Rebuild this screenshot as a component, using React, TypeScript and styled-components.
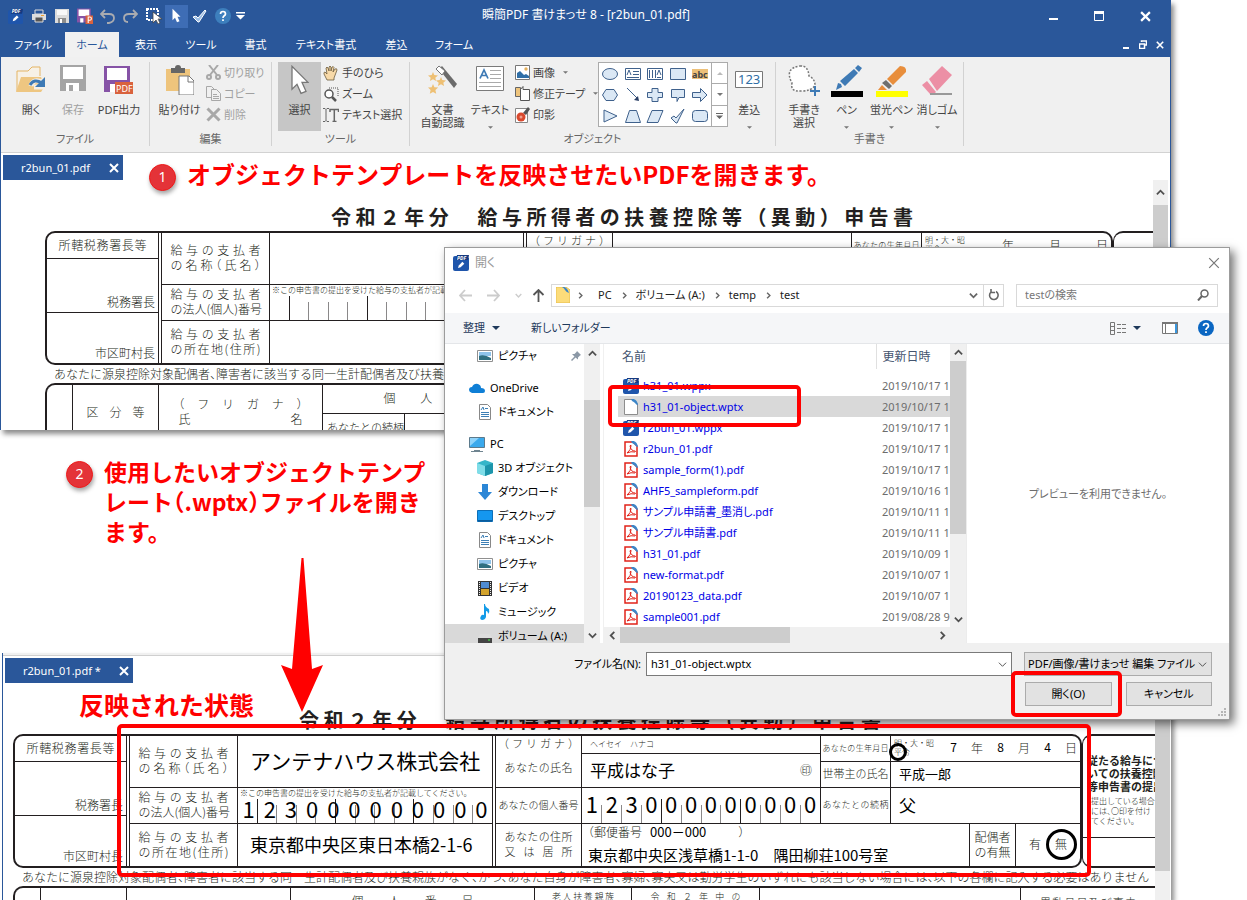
import React from "react";
import styled, { createGlobalStyle, css } from "styled-components";

const uiFont = '"Noto Sans", "Noto Sans CJK JP", sans-serif';
const paperFont = '"Noto Sans CJK JP", sans-serif';
const blue = "#2a579a";
const ink = "#231f20";

const Global = createGlobalStyle`
  * { box-sizing: border-box; }
  body { margin: 0; background: #fff; font-family: ${uiFont}; font-size: 11px; line-height: 14px; color: #444; }
  button, input, select { font: inherit; color: inherit; margin: 0; }
  button { border: 0; padding: 0; background: none; }
  svg { display: block; flex: none; }
`;

const Stage = styled.main`
  position: relative;
  min-height: 100vh;
  overflow: hidden;
  font-feature-settings: "palt";
`;

/* ---------- editor window ---------- */

const EditorWindow = styled.section`
  position: absolute;
  left: 0;
  right: 76px;
  top: 0;
  height: 430px;
  display: flex;
  flex-direction: column;
  overflow: hidden;
  background: #fff;
  border: solid ${blue};
  border-width: 0 1px;
`;

const WindowShadow = styled.div<{ $top: number; $height?: number }>`
  position: absolute;
  left: 0;
  right: 76px;
  top: ${(p) => p.$top}px;
  ${(p) => (p.$height ? `height: ${p.$height}px;` : "bottom: 0;")}
  box-shadow: 3px 4px 5px rgba(0, 0, 0, 0.45);
`;

const ResultWindow = styled.section`
  position: absolute;
  left: 2px;
  right: 76px;
  top: 653px;
  bottom: 0;
  display: flex;
  flex-direction: column;
  overflow: hidden;
  background: #fff;
  border-left: 1px solid ${blue};
`;

const RibbonEdge = styled.div`
  flex: none;
  height: 3px;
  background: #f0f0f0;
  border-bottom: 1px solid #cfcfcf;
`;

const TitleBar = styled.header`
  flex: none;
  height: 32px;
  display: flex;
  background: ${blue};
  color: #fff;
`;

const QuickBar = styled.div`
  flex: 1;
  display: flex;
  align-items: center;
  padding-left: 3px;
`;

const QuickButton = styled.button<{ $on?: boolean; $narrow?: boolean }>`
  width: ${(p) => (p.$narrow ? 13 : 23)}px;
  height: 23px;
  display: flex;
  align-items: center;
  justify-content: center;
  background: ${(p) => (p.$on ? "#3e6db5" : "none")};
`;

const AppTitle = styled.h1`
  margin: 0;
  font-size: 12px;
  font-weight: 400;
  line-height: 30px;
`;

const WindowButtons = styled.div`
  flex: 1;
  display: flex;
  justify-content: flex-end;
  padding-right: 2px;
`;

const WindowButton = styled.button<{ $w: number }>`
  width: ${(p) => p.$w}px;
  height: 100%;
  display: flex;
  align-items: center;
  justify-content: center;
`;

const TabRow = styled.nav`
  flex: none;
  height: 25px;
  display: flex;
  background: ${blue};
`;

const RibbonTab = styled.button<{ $w: number; $on?: boolean }>`
  width: ${(p) => p.$w}px;
  color: ${(p) => (p.$on ? blue : "#fff")};
  background: ${(p) => (p.$on ? "#f1f1f1" : "none")};
`;

const Ribbon = styled.div`
  flex: none;
  height: 96px;
  display: flex;
  padding-top: 5px;
  background: #f0f0f0;
  border-bottom: 1px solid #d2d2d2;
`;

const Group = styled.section<{ $w: number }>`
  width: ${(p) => p.$w}px;
  height: 84px;
  display: flex;
  flex-direction: column;
  border-right: 1px solid #d2d2d2;
`;

const GroupBody = styled.div<{ $pad?: number }>`
  height: 69px;
  display: flex;
  padding: 0 5px 0 ${(p) => p.$pad ?? 5}px;
`;

const GroupName = styled.h2`
  margin: 0;
  font-size: 11px;
  line-height: 15px;
  font-weight: 400;
  color: #666;
  text-align: center;
`;

const BigButton = styled.button<{ $w: number; $on?: boolean; $off?: boolean }>`
  flex: none;
  width: ${(p) => p.$w}px;
  height: 69px;
  display: flex;
  flex-direction: column;
  align-items: center;
  line-height: 13px;
  white-space: nowrap;
  color: ${(p) => (p.$off ? "#a0a0a0" : "#444")};
  background: ${(p) => (p.$on ? "#c6c6c6" : "none")};
`;

const IconSlot = styled.span`
  height: 41px;
  padding-top: 3px;
`;

const CaretSlot = styled.span`
  margin-top: auto;
  padding-bottom: 2px;
`;

const SmallColumn = styled.div`
  display: flex;
  flex-direction: column;
  padding-left: 2px;
`;

const SmallButton = styled.button<{ $off?: boolean }>`
  height: 21px;
  display: flex;
  align-items: center;
  justify-content: flex-start;
  gap: 3px;
  white-space: nowrap;
  color: ${(p) => (p.$off ? "#a0a0a0" : "#444")};
`;

const SideCaret = styled.span`
  padding-left: 5px;
`;

const Gallery = styled.div`
  flex: none;
  width: 130px;
  height: 65px;
  display: flex;
  background: #fff;
  border: 1px solid #ababab;
`;

const GalleryGrid = styled.div`
  flex: 1;
  display: grid;
  grid-template-columns: repeat(5, 1fr);
  grid-auto-rows: 21px;
`;

const GalleryCell = styled.button`
  display: flex;
  align-items: center;
  justify-content: center;
`;

const GallerySteps = styled.div`
  width: 16px;
  display: flex;
  flex-direction: column;
`;

const GalleryStep = styled.button`
  flex: 1;
  display: flex;
  align-items: center;
  justify-content: center;
  border: solid #ababab;
  border-width: 0 0 1px 1px;
  &:last-child { border-bottom: 0; }
`;

const DocTabs = styled.div`
  flex: none;
  display: flex;
  padding: 2px 0 0 2px;
`;

const DocTab = styled.div<{ $w: number }>`
  width: ${(p) => p.$w}px;
  height: 25px;
  display: flex;
  align-items: center;
  justify-content: space-between;
  padding: 0 4px 0 18px;
  color: #fff;
  background: ${blue};
`;

/* ---------- scroll bars ---------- */

const VBar = styled.div<{ $w?: number; $inset?: number }>`
  flex: none;
  width: ${(p) => p.$w ?? 15}px;
  margin-right: ${(p) => p.$inset ?? 0}px;
  display: flex;
  flex-direction: column;
  background: #f0f0f0;
`;

const HBar = styled.div`
  height: 16px;
  display: flex;
  background: #f0f0f0;
`;

const BarButton = styled.button<{ $size?: number }>`
  flex: none;
  min-width: 16px;
  height: ${(p) => p.$size ?? 16}px;
  display: flex;
  align-items: center;
  justify-content: center;
  align-self: center;
`;

const Thumb = styled.div<{ $before?: number; $length?: number; $flat?: boolean }>`
  background: #cdcdcd;
  ${(p) =>
    p.$flat
      ? css`width: ${p.$length}px;`
      : css`
          margin-top: ${p.$before ?? 0}px;
          ${p.$length ? `height: ${p.$length}px;` : "flex: 1;"}
        `}
`;

const Push = styled.span`
  flex: 1;
`;

/* ---------- tax form ---------- */

const DocArea = styled.div`
  flex: 1;
  display: flex;
  min-height: 0;
`;

const Paper = styled.article<{ $left: number }>`
  flex: 1;
  min-width: 0;
  overflow: hidden;
  padding: 25px 0 0 ${(p) => p.$left}px;
  font-family: ${paperFont};
  font-size: 12px;
  font-weight: 300;
  font-feature-settings: "halt";
  color: ${ink};
  line-height: 15px;
`;

const PaperTitle = styled.h2`
  width: 582px;
  margin: 0 0 2px 286px;
  font-size: 20px;
  line-height: 24px;
  font-weight: 700;
  font-feature-settings: normal;
  white-space: nowrap;
  text-align-last: justify;
`;

const Sheet = styled.div`
  display: flex;
  height: 134px;
`;

const FormBox = styled.div`
  flex: 1;
  min-width: 0;
  display: flex;
  border: 2px solid ${ink};
  border-radius: 10px;
`;

const SideBox = styled.div<{ $w: number }>`
  flex: none;
  width: ${(p) => p.$w}px;
  overflow: hidden;
  white-space: nowrap;
  border: 2px solid ${ink};
  border-width: 2px 0 2px 1px;
  border-radius: 10px 0 0 10px;
`;

const SideLead = styled.p`
  height: 60px;
  margin: 0;
  padding: 18px 0 0 4px;
  font-size: 11px;
  line-height: 13px;
  font-weight: 700;
`;

const SideText = styled.p`
  height: 42px;
  margin: 0;
  padding-left: 8px;
  font-size: 8px;
  line-height: 10px;
  border-bottom: 1px solid ${ink};
`;

const Column = styled.div<{ $w?: number; $edge?: "single" | "double" }>`
  flex: ${(p) => (p.$w ? "none" : "1")};
  width: ${(p) => (p.$w ? `${p.$w}px` : "auto")};
  min-width: 0;
  display: flex;
  flex-direction: column;
  border-right: ${(p) => (p.$edge === "double" ? `4px double ${ink}` : p.$edge ? `1px solid ${ink}` : "0")};
`;

const Band = styled.div<{ $h: number; $line?: boolean }>`
  height: ${(p) => p.$h}px;
  display: flex;
  border-bottom: ${(p) => (p.$line ? `1px solid ${ink}` : "0")};
`;

const Cell = styled.div<{ $h: number; $align?: string; $valign?: string; $pad?: number; $last?: boolean; $flush?: boolean }>`
  flex: none;
  height: ${(p) => p.$h}px;
  display: flex;
  flex-direction: column;
  justify-content: ${(p) => p.$valign ?? "center"};
  align-items: ${(p) => p.$align ?? "center"};
  padding: 0 ${(p) => p.$pad ?? 0}px ${(p) => (p.$flush ? 0 : 3)}px;
  white-space: nowrap;
  border-bottom: ${(p) => (p.$last ? "0" : `1px solid ${ink}`)};
`;

const Spread = styled.span<{ $w: number; $size?: number }>`
  display: block;
  width: ${(p) => p.$w}px;
  font-size: ${(p) => p.$size ?? 12}px;
  text-align-last: justify;
`;

const Hand = styled.span<{ $size: number }>`
  font-size: ${(p) => p.$size}px;
  line-height: ${(p) => p.$size + 2}px;
  font-weight: 400;
  color: #000;
`;

const Remark = styled.span`
  height: 9px;
  font-size: 8px;
  line-height: 9px;
  padding-left: 2px;
`;

const NumberStrip = styled.div`
  flex: 1;
  width: 100%;
  display: grid;
`;

const Ticks = styled.div`
  grid-area: 1 / 1;
  display: flex;
  align-items: flex-end;
`;

const Tick = styled.span<{ $major: boolean; $none: boolean }>`
  flex: 1;
  height: ${(p) => (p.$major ? 24 : 18)}px;
  border-right: ${(p) => (p.$none ? "0" : p.$major ? `1px solid ${ink}` : "1px solid #8a8889")};
`;

const Digits = styled.div`
  grid-area: 1 / 1;
  display: flex;
  align-items: center;
  padding-bottom: 5px;
`;

const Digit = styled.span`
  flex: 1;
  text-align: center;
  font-size: 22px;
  line-height: 20px;
  font-weight: 400;
  color: #000;
`;

const Inline = styled.div<{ $gap?: number; $between?: boolean }>`
  width: ${(p) => (p.$between ? "100%" : "auto")};
  display: flex;
  align-items: center;
  justify-content: ${(p) => (p.$between ? "space-between" : "flex-start")};
  gap: ${(p) => p.$gap ?? 0}px;
`;

const Tiny = styled.span`
  width: 42px;
  font-size: 8px;
  line-height: 9px;
  font-feature-settings: normal;
`;

const Ringed = styled.span`
  position: relative;
`;

const Ring = styled.i<{ $size: number; $x: number; $y: number }>`
  position: absolute;
  left: ${(p) => p.$x}px;
  top: ${(p) => p.$y}px;
  width: ${(p) => p.$size}px;
  height: ${(p) => p.$size}px;
  border: 3px solid #000;
  border-radius: 50%;
`;

const Notice = styled.p`
  margin: 0;
  padding-left: 9px;
  font-size: 12px;
  line-height: 18px;
  white-space: nowrap;
  overflow: hidden;
`;

const LowerBox = styled.div`
  height: 120px;
  display: flex;
  border: solid ${ink};
  border-width: 2px 0 0 2px;
  border-radius: 10px 0 0 0;
`;

const LowerCell = styled.div<{ $w?: number; $top?: number }>`
  flex: ${(p) => (p.$w ? "none" : "1")};
  width: ${(p) => (p.$w ? `${p.$w}px` : "auto")};
  display: flex;
  flex-direction: column;
  align-items: center;
  padding-top: ${(p) => p.$top ?? 0}px;
  white-space: nowrap;
  border-right: 1px solid ${ink};
  &:last-child { border-right: 0; }
`;

const LowerHead = styled.div`
  width: 100%;
  height: 29px;
  display: flex;
  justify-content: center;
  padding-top: 5px;
  border-bottom: 1px solid ${ink};
`;

const LowerRelation = styled.div`
  width: 82px;
  height: 90px;
  align-self: flex-start;
  padding: 6px 0 0 4px;
  font-size: 11px;
  border-right: 1px solid ${ink};
`;

type Filled = {
  company: string;
  corporate: string;
  companyAddress: string;
  kana: string;
  name: string;
  personal: string;
  year: string;
  month: string;
  day: string;
  head: string;
  relation: string;
  post: string;
  address: string;
};

const filled: Filled = {
  company: "アンテナハウス株式会社",
  corporate: "123000000000",
  companyAddress: "東京都中央区東日本橋2-1-6",
  kana: "ヘイセイ　ハナコ",
  name: "平成はな子",
  personal: "123000000000",
  year: "7",
  month: "8",
  day: "4",
  head: "平成一郎",
  relation: "父",
  post: "000－000",
  address: "東京都中央区浅草橋1-1-0　隅田柳荘100号室",
};

const NumberRow = ({ cells, first, value }: { cells: number; first: number; value?: string }) => (
  <NumberStrip>
    <Ticks>
      {Array.from({ length: cells }, (_, i) => (
        <Tick key={i} $major={i % 4 === first} $none={i === cells - 1} />
      ))}
    </Ticks>
    {value && (
      <Digits>
        {value.split("").map((d, i) => (
          <Digit key={i}>{d}</Digit>
        ))}
      </Digits>
    )}
  </NumberStrip>
);

const TaxForm = ({ left, side, data }: { left: number; side: number; data?: Filled }) => (
  <Paper $left={left}>
    <PaperTitle>令和２年分　給与所得者の扶養控除等（異動）申告書</PaperTitle>
    <Sheet>
      <FormBox>
        <Column $w={115} $edge="double">
          <Cell $h={26}>
            <Spread $w={88}>所轄税務署長等</Spread>
          </Cell>
          <Cell $h={54} $align="flex-end" $valign="flex-end" $pad={3}>税務署長</Cell>
          <Cell $h={50} $align="flex-end" $valign="flex-end" $pad={3} $last>市区町村長</Cell>
        </Column>
        <Column $w={108} $edge="single">
          <Cell $h={52}>
            <Spread $w={90}>給与の支払者</Spread>
            <Spread $w={90}>の名称（氏名）</Spread>
          </Cell>
          <Cell $h={36}>
            <Spread $w={90}>給与の支払者</Spread>
            <Spread $w={90}>の法人(個人)番号</Spread>
          </Cell>
          <Cell $h={42} $last>
            <Spread $w={90}>給与の支払者</Spread>
            <Spread $w={90}>の所在地(住所)</Spread>
          </Cell>
        </Column>
        <Column $edge="double">
          <Cell $h={52} $align="flex-start" $pad={12}>
            <Hand $size={21}>{data?.company}</Hand>
          </Cell>
          <Cell $h={36} $align="flex-start" $flush>
            <Remark>※この申告書の提出を受けた給与の支払者が記載してください。</Remark>
            <NumberRow cells={13} first={0} value={data?.corporate} />
          </Cell>
          <Cell $h={42} $align="flex-start" $pad={12} $last>
            <Hand $size={18}>{data?.companyAddress}</Hand>
          </Cell>
        </Column>
        <Column $w={86} $edge="single">
          <Cell $h={52} $valign="space-between">
            <Spread $w={70} $size={11}>（フリガナ）</Spread>
            <Spread $w={68} $size={11}>あなたの氏名</Spread>
            <span />
          </Cell>
          <Cell $h={36}>
            <Spread $w={80} $size={10}>あなたの個人番号</Spread>
          </Cell>
          <Cell $h={42} $last>
            <Spread $w={68} $size={11}>あなたの住所</Spread>
            <Spread $w={68} $size={11}>又は居所</Spread>
          </Cell>
        </Column>
        <Column $w={498}>
          <Band $h={88} $line>
            <Column $edge="single">
              <Cell $h={18} $align="flex-start" $pad={6}>
                <Remark>{data?.kana}</Remark>
              </Cell>
              <Cell $h={34} $align="flex-start" $pad={8}>
                <Inline $between>
                  <Hand $size={17}>{data?.name}</Hand>
                  <span>㊞</span>
                </Inline>
              </Cell>
              <Cell $h={35} $last $flush>
                <NumberRow cells={12} first={3} value={data?.personal} />
              </Cell>
            </Column>
            <Column $w={70} $edge="single">
              <Cell $h={26}>
                <Spread $w={66} $size={8}>あなたの生年月日</Spread>
              </Cell>
              <Cell $h={26}>
                <Spread $w={66} $size={11}>世帯主の氏名</Spread>
              </Cell>
              <Cell $h={35} $last>
                <Spread $w={66} $size={9}>あなたとの続柄</Spread>
              </Cell>
            </Column>
            <Column $w={189}>
              <Cell $h={26} $pad={3}>
                <Inline $between>
                  <Tiny>
                    明・大・昭
                    <br />
                    <Ringed>
                      平{data && <Ring $size={18} $x={-5} $y={-3} />}
                    </Ringed>
                    　令
                  </Tiny>
                  <Hand $size={12}>{data?.year ?? "　"}</Hand>
                  <span>年</span>
                  <Hand $size={12}>{data?.month ?? "　"}</Hand>
                  <span>月</span>
                  <Hand $size={12}>{data?.day ?? "　"}</Hand>
                  <span>日</span>
                </Inline>
              </Cell>
              <Cell $h={26} $align="flex-start" $pad={8}>
                <Hand $size={13}>{data?.head}</Hand>
              </Cell>
              <Cell $h={35} $align="flex-start" $pad={8} $last>
                <Hand $size={17}>{data?.relation}</Hand>
              </Cell>
            </Column>
          </Band>
          <Band $h={42}>
            <Column $edge="single">
              <Cell $h={42} $align="flex-start" $pad={6} $valign="space-between" $last>
                <Inline $gap={8}>
                  <span>（郵便番号</span>
                  <Hand $size={13}>{data?.post}</Hand>
                  <span>　　）</span>
                </Inline>
                <Hand $size={15}>{data?.address}</Hand>
              </Cell>
            </Column>
            <Column $w={46} $edge="single">
              <Cell $h={42} $last>
                <span>配偶者</span>
                <span>の有無</span>
              </Cell>
            </Column>
            <Column $w={64}>
              <Cell $h={42} $last>
                <Inline $gap={14}>
                  <span>有</span>
                  <Ringed>
                    無{data && <Ring $size={31} $x={-9} $y={-7} />}
                  </Ringed>
                </Inline>
              </Cell>
            </Column>
          </Band>
        </Column>
      </FormBox>
      <SideBox $w={side}>
        {data && (
          <>
            <SideLead>
              従たる給与につ
              <br />
              いての扶養控除
              <br />
              等申告書の提出
            </SideLead>
            <SideText>
              提出している場合
              <br />
              には、〇印を付け
              <br />
              てください。
            </SideText>
          </>
        )}
      </SideBox>
    </Sheet>
    <Notice>
      あなたに源泉控除対象配偶者、障害者に該当する同一生計配偶者及び扶養親族がなく、かつ、あなた自身が障害者、寡婦、寡夫又は勤労学生のいずれにも該当しない場合には、以下の各欄に記入する必要はありません
    </Notice>
    <LowerBox>
      <LowerCell $w={26} />
      <LowerCell $w={86} $top={19}>
        <Spread $w={58}>区分等</Spread>
      </LowerCell>
      <LowerCell $w={164} $top={11}>
        <Spread $w={124}>（フリガナ）</Spread>
        <Spread $w={124}>氏名</Spread>
      </LowerCell>
      <LowerCell $w={244}>
        <LowerHead>
          <Spread $w={122}>個人番号</Spread>
        </LowerHead>
        <LowerRelation>あなたとの続柄</LowerRelation>
      </LowerCell>
      <LowerCell $w={97} $top={1}>
        <Spread $w={62} $size={9}>老人扶養親族</Spread>
      </LowerCell>
      <LowerCell $w={128} $top={1}>
        <Spread $w={90} $size={9}>令和２年中の</Spread>
      </LowerCell>
      <LowerCell />
      <LowerCell $w={134} $top={7}>
        <Spread $w={96} $size={11}>異動月日及び事由</Spread>
      </LowerCell>
    </LowerBox>
  </Paper>
);

/* ---------- icons ---------- */

const Caret = ({ w = 5, color = "#777" }: { w?: number; color?: string }) => (
  <svg width={w} height={Math.ceil(w / 2)} viewBox="0 0 6 3"><path d="M0 0h6L3 3z" fill={color} /></svg>
);

const Chevron = ({ dir, size = 9, color = "#505050", weight = 2 }: { dir: "up" | "down" | "left" | "right"; size?: number; color?: string; weight?: number }) => {
  const d = { up: "M1 7l4-4 4 4", down: "M1 3l4 4 4-4", left: "M7 1L3 5l4 4", right: "M3 1l4 4-4 4" }[dir];
  return <svg width={size} height={size} viewBox="0 0 10 10"><path d={d} fill="none" stroke={color} strokeWidth={weight} /></svg>;
};

const Cross = ({ size = 10, color = "#fff", weight = 2 }: { size?: number; color?: string; weight?: number }) => (
  <svg width={size} height={size} viewBox="0 0 10 10"><path d="M1 1l8 8M9 1L1 9" fill="none" stroke={color} strokeWidth={weight} /></svg>
);

const AppIcon = ({ size = 16 }: { size?: number }) => (
  <svg width={size} height={size} viewBox="0 0 16 16">
    <path d="M2 1h11l3 2v11q0 2-2 2H2q-2 0-2-2V3q0-2 2-2z" fill="#1f55ab" />
    <path d="M4 0h12l-1 5H3z" fill="#163a80" />
    <text x="4" y="4.500" fontSize="5" fontWeight="700" fontStyle="italic" fill="#fff">PDF</text>
    <path d="M5 13l.8-2.600 3.600-3.600 1.900 1.900-3.700 3.600z" fill="#fff" />
  </svg>
);

const PrinterIcon = () => (
  <svg width="14" height="14" viewBox="0 0 14 14">
    <path d="M3 1h8v4H3z" fill="none" stroke="#ddd" />
    <path d="M0 5h14v6H0z" fill="#ddd" />
    <path d="M3 8h8v5H3z" fill="#555" stroke="#ddd" />
    <path d="M9 6.500h3" stroke="#f0a030" />
  </svg>
);

const FloppyIcon = ({ size, color, paper = "#fff" }: { size: number; color: string; paper?: string }) => (
  <svg width={size} height={size} viewBox="0 0 26 26">
    <path d="M0 0h26v26H0z" fill={color} />
    <path d="M3 2h20v12H3zM6 18h13v8H6z" fill={paper} />
    <path d="M9 20h4v6H9z" fill={color} />
  </svg>
);

const QuickSaveIcon = () => (
  <svg width="14" height="14" viewBox="0 0 14 14">
    <path d="M0 0h14v14H0z" fill="#dcdcdc" />
    <path d="M2 1h10v5H2z" fill="#f8f8f8" />
    <path d="M3 9h8v5H3z" fill="#8d8d8d" />
    <path d="M5 10h2v4H5z" fill="#fff" />
  </svg>
);

const FloppyPdfIcon = ({ size, label }: { size: number; label: string }) => (
  <svg width={size} height={size} viewBox="0 0 30 30">
    <path d="M0 1h26v26H0z" fill="#8653a6" />
    <path d="M3 3h20v12H3zM6 19h6v8H6z" fill="#fff" />
    <path d={label === "P" ? "M16 14h14v16H16z" : "M11 17h18v12H11z"} fill="#d9623d" />
    {label === "P" ? (
      <path d="M21 28V17h3q3 0 3 3t-3 3h-3" fill="none" stroke="#fff" strokeWidth="2" />
    ) : (
      <text x="12" y="26.500" fontSize="9" fill="#fff">PDF</text>
    )}
  </svg>
);

const UndoIcon = ({ flip }: { flip?: boolean }) => (
  <svg width="15" height="15" viewBox="0 0 15 15">
    <path
      d={flip ? "M14 5H6q-5 0-5 4t4 4M10 1l4 4-4 4" : "M1 5h8q5 0 5 4t-5 5H7M5 1L1 5l4 4"}
      fill="none" stroke="#a9abb0" strokeWidth="1.800"
    />
  </svg>
);

const CursorIcon = ({ w = 9, stroke = "none" }: { w?: number; stroke?: string }) => (
  <svg width={w} height={w * 1.7} viewBox="0 0 18 30">
    <path d="M1 1v23l5-5 4 9 5-2-4-9h6z" fill="#fff" stroke={stroke} strokeWidth="1.300" />
  </svg>
);

const AreaCursorIcon = () => (
  <svg width="16" height="16" viewBox="0 0 16 16">
    <path d="M1 1h11v11H1z" fill="none" stroke="#fff" strokeWidth="2" strokeDasharray="2 1" />
    <path d="M7 4v11l3-3 2 4 2-1-2-4h4z" fill="#fff" stroke="#444" strokeWidth=".8" />
  </svg>
);

const TickIcon = ({ fill = "#9fc0e6", stroke = "#fff" }: { fill?: string; stroke?: string }) => (
  <svg width="15" height="14" viewBox="0 0 15 14">
    <path d="M1 8l3-1 2 2 7-8 1 1-7 11H6z" fill={fill} stroke={stroke} />
  </svg>
);

const HelpIcon = ({ bg, size = 16 }: { bg: string; size?: number }) => (
  <svg width={size} height={size} viewBox="0 0 16 16">
    <circle cx="8" cy="8" r="8" fill={bg} />
    <path d="M5.500 6q0-2.500 2.500-2.500T10.500 6Q10.500 7 9 8q-1 .7-1 2M8 11.200v1.800" fill="none" stroke="#fff" strokeWidth="1.700" />
  </svg>
);

const OpenFolderIcon = () => (
  <svg width="30" height="28" viewBox="0 0 30 28">
    <path d="M1 26V6h11l4-4h8v9" fill="#f7f1e6" stroke="#e5b564" />
    <path d="M0 27L5 12h20l4 5v4l-4 6z" fill="#eec681" />
    <path d="M15 21q2-8 11-4M28 11v11H18" fill="none" stroke="#f4f0e8" strokeWidth="5" />
    <path d="M14 20q4-7 12-2" fill="none" stroke="#3e7ab5" strokeWidth="3" />
    <path d="M29 12v10H19z" fill="#3e7ab5" />
  </svg>
);

const PasteIcon = () => (
  <svg width="28" height="30" viewBox="0 0 28 30">
    <path d="M0 4h24v22H0z" fill="#eec47c" />
    <path d="M5 3h4q0-3 3-3t3 3h4v5H5z" fill="#666" />
    <path d="M13 11h10l5 5v14H13z" fill="#fff" stroke="#777" />
    <path d="M22 11v6h6" fill="none" stroke="#777" />
  </svg>
);

const ScissorsIcon = () => (
  <svg width="15" height="15" viewBox="0 0 15 15" fill="none" stroke="#a8a8a8" strokeWidth="2">
    <circle cx="3" cy="12" r="2" /><circle cx="12" cy="12" r="2" />
    <path d="M4 10l8-10M11 10L3 0" />
  </svg>
);

const CopyIcon = () => (
  <svg width="15" height="15" viewBox="0 0 15 15" fill="#f0f0f0" stroke="#a8a8a8">
    <path d="M.5.500h5l3 3v8h-8z" /><path d="M5.500 3.500h5l4 4v7h-9zM7 8.500h4M7 10.500h6M7 12.500h6" />
  </svg>
);

const HandIcon = () => (
  <svg width="16" height="16" viewBox="0 0 16 16">
    <path d="M4 15L1 9q-.5-2 1-2l2 2L3 3q1-2 2 0l1 3V2q1-2 2 0v4l1-4q1.500-1 2 .5L10 7l2-3q2-1 2 1l-3 8v2z" fill="#f7d9a8" stroke="#6b5a3c" strokeWidth=".8" />
  </svg>
);

const ZoomIcon = () => (
  <svg width="16" height="16" viewBox="0 0 16 16" fill="none" stroke="#555">
    <path d="M6 2h9v9" strokeDasharray="1 1" />
    <circle cx="6" cy="8" r="4" strokeWidth="1.500" fill="#fff" /><path d="M9 11l4 4" strokeWidth="2.500" />
  </svg>
);

const TextSelectIcon = () => (
  <svg width="16" height="14" viewBox="0 0 16 14" fill="none" stroke="#666">
    <path d="M0 .5h2l1 1 1-1h2M3 1.500v11M0 13.500h2l1-1 1 1h2" />
    <path d="M7 4V1.500h8.500V4M11.300 1.500v12M9.500 13.500h4" strokeWidth="1.500" />
  </svg>
);

const WandIcon = () => (
  <svg width="30" height="30" viewBox="0 0 30 30">
    <path d="M11 4l3-3 15 18-3 4z" fill="#6b6b6b" />
    <path d="M8 4l3-3 6 5-3 4z" fill="#fff" stroke="#777" />
    <path d="M5 7l1.300 3 3.700.4-2.700 2.400.8 3.200L5 14.300 1.900 16l.8-3.200L0 10.400 3.700 10z" fill="#eec074" />
    <path d="M13 12l1.300 3 3.700.4-2.700 2.400.8 3.200-3.100-1.700L9.900 21l.8-3.200L8 15.400l3.700-.4z" fill="#eec074" />
    <path d="M5 19l1.400 3.200 3.800.4-2.800 2.500.8 3.600L5 26.900l-3.200 1.800.8-3.600L0 22.600l3.600-.4z" fill="#eec074" />
  </svg>
);

const TextBoxIcon = () => (
  <svg width="28" height="26" viewBox="0 0 28 26" fill="none">
    <path d="M.5 1.500h27v24H.5z" fill="#fff" stroke="#7a7a7a" />
    <path d="M4 13.500L8 5l4 8.500M5.500 10.500h5" stroke="#3e7ab5" strokeWidth="1.700" />
    <path d="M14 5.500h11M14 9.500h11M14 13.500h11M3 17.500h22M3 21.500h22" stroke="#aaa" />
  </svg>
);

const PictureIcon = () => (
  <svg width="15" height="15" viewBox="0 0 15 15">
    <path d="M.5.500h14v14H.5z" fill="#fff" stroke="#777" />
    <circle cx="11" cy="4" r="1.700" fill="#e5b05c" /><path d="M2 13V8l3-2 4 4 2-1 3 2v2z" fill="#2f6ea6" />
  </svg>
);

const TapeIcon = () => (
  <svg width="15" height="15" viewBox="0 0 15 15">
    <path d="M.5 1.500h5v9h-5z" fill="#eec47c" stroke="#666" />
    <path d="M5.500 3.500L8 .5v3h6.500v11h-9z" fill="#fff" stroke="#555" />
  </svg>
);

const StampIcon = () => (
  <svg width="15" height="16" viewBox="0 0 15 16">
    <path d="M.5 1.500h12v14H.5z" fill="#fff" stroke="#888" />
    <path d="M8 6l5-6 2 2-4 6z" fill="#555" /><circle cx="6" cy="10" r="4.500" fill="#d9492e" /><circle cx="6" cy="10" r="1.500" fill="#f0a08e" />
  </svg>
);

const shapeStyle = { fill: "#dbe8f5", stroke: "#3f618c" };
const shapes = [
  <ellipse cx="9" cy="8" rx="7.500" ry="5.500" {...shapeStyle} />,
  <g fill="none" stroke="#3f618c"><path d="M1.500 2.500h15v11h-15z" fill="#fff" /><path d="M3 9l2-5 2 5M9 5.500h6M9 8.500h6M3 11.500h12" /></g>,
  <g fill="none" stroke="#3f618c"><path d="M1.500 2.500h15v11h-15z" fill="#fff" /><path d="M11 9l2-5 2 5M3.500 4v8M6.500 4v8M9.500 4v8M11 11.500h4" /></g>,
  <path d="M1.500 2.500h15v11h-15z" {...shapeStyle} />,
  <g><path d="M1 3h16v10H1z" fill="#edc078" /><text x="1" y="12" fontSize="9" fontWeight="700" fill="#444">abc</text></g>,
  <path d="M5 2.500h8l3.500 5.500-3.500 5.500H5L1.500 8z" {...shapeStyle} />,
  <g><path d="M3 1l11 11" stroke="#3f618c" /><path d="M15 14l-5-1 4-4z" fill="#2a3f66" /></g>,
  <path d="M6 1.500h6v4h4.500v5H12v4H6v-4H1.500v-5H6z" {...shapeStyle} />,
  <path d="M2.500 2.500h13v8H10l-2 4v-4H2.500z" {...shapeStyle} />,
  <path d="M1.500 5.500h8v-4L16 8l-6.500 6.500v-4h-8z" {...shapeStyle} />,
  <path d="M3 2l13 6-13 6z" {...shapeStyle} />,
  <path d="M5.500 2.500h7l4 12h-15z" {...shapeStyle} />,
  <path d="M6 2.500h11l-5 12H1z" {...shapeStyle} />,
  <path d="M2 10l3-2 2 2 8-9-7 14H7z" {...shapeStyle} />,
  <rect x="1.500" y="2.500" width="15" height="11" rx="3" {...shapeStyle} />,
];

const NumberBoxIcon = () => (
  <svg width="28" height="26" viewBox="0 0 28 26">
    <path d="M.5 6.500h27v16H.5z" fill="#fff" stroke="#777" />
    <text x="3" y="19" fontSize="13" fill="#2f6ea6">123</text>
  </svg>
);

const LassoIcon = () => (
  <svg width="32" height="31" viewBox="0 0 32 31" fill="none">
    <path d="M12 1q8-1 9 10 6 3 6 9-3 6-14 6Q2 27 4 18-4 3 12 1z" fill="#fff" stroke="#777" strokeWidth="1.500" strokeDasharray="2 1.500" />
    <path d="M27 21v10M22 26h10" stroke="#3e7ab5" strokeWidth="2" />
  </svg>
);

const PenIcon = () => (
  <svg width="32" height="32" viewBox="0 0 32 32">
    <path d="M5 25l2-7 3 1 1 3zM9 16L23 4l4 4-13 13zM24 3l3-3 4 3-3 4z" fill="#3e7ab5" />
    <path d="M0 26h32v6H0z" />
  </svg>
);

const MarkerIcon = () => (
  <svg width="32" height="32" viewBox="0 0 32 32">
    <path d="M11 14L24 1q7 0 6 6L17 20z" fill="#e88e3c" /><path d="M6 18l4-3 6 6-3 3z" fill="#6f6f6f" /><path d="M2 25l4-5 5 5z" fill="#e88e3c" />
    <path d="M0 26h32v6H0z" fill="#ff0" />
  </svg>
);

const EraserIcon = () => (
  <svg width="30" height="31" viewBox="0 0 30 31">
    <path d="M7 14L20 1l10 9-15 16z" fill="#ec8fa5" /><path d="M0 20l5-4 9 11-2 2H8z" fill="#ec8fa5" />
    <path d="M8 29h22" stroke="#999" strokeWidth="2" />
  </svg>
);

const PdfFileIcon = () => (
  <svg width="14" height="16" viewBox="0 0 14 16">
    <path d="M1 1h8l4 4v10H1z" fill="#fff" stroke="#e1231a" strokeWidth="1.500" />
    <path d="M3 12q4-3 4-7 0-2-1 0 1 5 5 5 1 0 0 1-4-1-8 1z" fill="none" stroke="#e1231a" />
    <path d="M7 0q6-1 7 6-2 0-3-2-1-1-3-2z" fill="#3c86c8" />
  </svg>
);

const BlankFileIcon = () => (
  <svg width="14" height="16" viewBox="0 0 14 16">
    <path d="M.5.500h9l4 4v11H.5z" fill="#fff" stroke="#8d8d8d" />
    <path d="M7 0q6-1 7 6-2 0-3-2-1-1-3-2z" fill="#3c86c8" />
  </svg>
);

const placeIcons: Record<string, React.ReactNode> = {
  picture: <g><path d="M.5 2.500h15v11H.5z" fill="#fff" stroke="#909090" /><path d="M2 4h12v4H2z" fill="#8ec3ea" /><path d="M2 8q5-2 12 2v2H2z" fill="#2f6f80" /></g>,
  cloud: <path d="M3 13q-3-1-3-3 0-3 3-3 2-4 6-3 3 1 3 4 4 0 4 3 0 2-2 2z" fill="#0f7fd6" />,
  doc: <g><path d="M2.500.500h8l3 3v12h-11z" fill="#fff" stroke="#888" /><path d="M4 6l2-3 1 3M8 4.500h3M4 8.500h8M4 10.500h8M4 12.500h8" stroke="#3d7fb5" fill="none" /></g>,
  pc: <g><path d="M.5 1.500h15v10H.5z" fill="#3aa9ec" stroke="#5c7a8c" /><path d="M1 2h9L1 10z" fill="#8fd3fa" /><path d="M5 14.500h6M2 15.500h12" stroke="#6f8490" /></g>,
  cube: <g><path d="M0 3l8-3 8 3v10l-8 3-8-3z" fill="#35b6c9" /><path d="M0 3l8 3v10l-8-3z" fill="#7fdde8" /><path d="M8 6l8-3v10l-8 3z" fill="#1d95ab" /></g>,
  down: <path d="M5 0h6v8h4l-7 8-7-8h4z" fill="#2b86d6" />,
  desk: <g><path d="M.5 2.500h15v11H.5z" fill="#1597ef" stroke="#0d6fb8" /><path d="M1 12h14v1.500H1z" fill="#0a5c9c" /></g>,
  film: <g><path d="M1 1h14v15H1z" fill="#333" /><path d="M4 2h8v6H4z" fill="#4f8bd0" /><path d="M4 9h8v6H4z" fill="#d3a32c" /><path d="M2.500 2v13M13.500 2v13" stroke="#eee" strokeDasharray="1 1" /></g>,
  music: <path d="M8 0q0 3 4 5 1 3-1 5 0-3-2-3v6q-1 3-4 3-3-1-1-4 1-2 3-1V0z" fill="#139be8" />,
  drive: <g><path d="M3 6h10l2 4H1z" fill="#ddd" /><path d="M1 10h14v5H1z" fill="#444" /><path d="M11 12h2" stroke="#4f4" /></g>,
};

const PlaceIcon = ({ kind }: { kind: string }) => (
  <svg width="16" height="16" viewBox="0 0 16 16">{placeIcons[kind]}</svg>
);

const Arrow = ({ dir, color }: { dir: "left" | "right" | "up"; color: string }) => (
  <svg width="13" height="13" viewBox="0 0 13 13">
    <path
      d={{ left: "M1 6.500h12M6 1L1 6.500 6 12", right: "M0 6.500h12M7 1l5 5.500L7 12", up: "M6.500 13V1M1.500 6l5-5 5 5" }[dir]}
      fill="none" stroke={color} strokeWidth="1.800"
    />
  </svg>
);

/* ---------- open dialog ---------- */

const Dialog = styled.section`
  position: absolute;
  left: 444px;
  right: 17px;
  top: 247px;
  height: 473px;
  display: flex;
  flex-direction: column;
  background: #fff;
  border: 1px solid #9c9c9c;
  box-shadow: 4px 4px 9px rgba(0, 0, 0, 0.55);
  color: #000;
`;

const DialogTitle = styled.header`
  height: 29px;
  display: flex;
  align-items: center;
  gap: 6px;
  padding: 0 9px 0 8px;
  font-size: 12px;
  color: #999;
`;

const NavRow = styled.div`
  height: 36px;
  display: flex;
  align-items: center;
  padding: 0 11px 0 6px;
`;

const NavButton = styled.button<{ $w: number }>`
  width: ${(p) => p.$w}px;
  height: 22px;
  display: flex;
  align-items: center;
  justify-content: center;
`;

const Address = styled.div`
  flex: 1;
  height: 23px;
  display: flex;
  align-items: center;
  margin-left: 2px;
  padding-left: 4px;
  border: 1px solid #d9d9d9;
`;

const Crumb = styled.button`
  height: 21px;
  display: flex;
  align-items: center;
  gap: 9px;
  padding-left: 8px;
  color: #222;
`;

const Refresh = styled.button`
  width: 20px;
  height: 21px;
  display: flex;
  align-items: center;
  justify-content: center;
  border-left: 1px solid #d9d9d9;
`;

const Search = styled.label`
  width: 202px;
  height: 23px;
  display: flex;
  align-items: center;
  margin-left: 12px;
  padding: 0 8px;
  border: 1px solid #d9d9d9;
`;

const SearchInput = styled.input`
  flex: 1;
  min-width: 0;
  border: 0;
  padding: 0;
  outline: 0;
  color: #777;
  font-feature-settings: inherit;
  &::placeholder { color: #777; opacity: 1; }
`;

const CommandBar = styled.div`
  height: 31px;
  display: flex;
  align-items: center;
  padding: 0 15px 0 18px;
  color: #1e395b;
  background: #f5f6f8;
  border-bottom: 1px solid #e4e6e9;
`;

const Command = styled.button<{ $gap?: number }>`
  display: flex;
  align-items: center;
  gap: 7px;
  margin-left: ${(p) => p.$gap ?? 0}px;
`;

const DialogBody = styled.div`
  flex: 1;
  min-height: 0;
  display: flex;
`;

const Places = styled.ul`
  flex: none;
  width: 139px;
  margin: 0;
  padding: 0;
  list-style: none;
  overflow: hidden;
`;

const Place = styled.li<{ $root?: boolean; $on?: boolean; $gap?: boolean }>`
  height: 24px;
  display: flex;
  align-items: center;
  gap: 5px;
  margin-top: ${(p) => (p.$gap ? 8 : 0)}px;
  padding: 0 3px 0 ${(p) => (p.$root ? 24 : 32)}px;
  white-space: nowrap;
  background: ${(p) => (p.$on ? "#d9d9d9" : "none")};
`;

const Files = styled.div`
  flex: none;
  width: 363px;
  display: flex;
  flex-direction: column;
  margin-left: 3px;
  border-left: 1px solid #f0f0f0;
`;

const FilesTop = styled.div`
  flex: 1;
  min-height: 0;
  display: flex;
`;

const FileScroll = styled.div`
  flex: 1;
  min-width: 0;
  overflow: hidden;
  padding-left: 14px;
`;

const FileTable = styled.table`
  width: 100%;
  table-layout: fixed;
  border-collapse: collapse;
`;

const HeadCell = styled.th<{ $w?: number; $line?: boolean }>`
  width: ${(p) => (p.$w ? `${p.$w}px` : "auto")};
  height: 25px;
  padding: 0 0 0 ${(p) => (p.$line ? 6 : 4)}px;
  text-align: left;
  font-size: 12px;
  font-weight: 400;
  color: #44546f;
  border-left: ${(p) => (p.$line ? "1px solid #e0e0e0" : "0")};
`;

const FileRow = styled.tr<{ $on?: boolean; $first?: boolean }>`
  height: ${(p) => (p.$first ? 27 : 21)}px;
  vertical-align: bottom;
  background: ${(p) => (p.$on ? "#d9d9d9" : "none")};
`;

const FileCell = styled.td`
  padding: 0 0 0 6px;
  white-space: nowrap;
  overflow: hidden;
  color: #6d6d6d;
  line-height: 21px;
`;

const FileName = styled.span`
  height: 21px;
  display: flex;
  align-items: center;
  gap: 5px;
  color: #0000e6;
`;

const IconBox = styled.span`
  width: 14px;
  display: flex;
  justify-content: center;
`;

const Preview = styled.div`
  flex: 1;
  display: flex;
  align-items: center;
  justify-content: center;
  border-left: 1px solid #ececec;
  color: #6d6d6d;
`;

const DialogFooter = styled.form`
  flex: none;
  height: 76px;
  display: grid;
  grid-template-columns: 196px 1fr 188px;
  grid-template-rows: 24px 24px;
  gap: 6px 12px;
  padding: 9px 17px 8px 0;
  background: #f0f0f0;
`;

const FieldLabel = styled.label`
  text-align: right;
  line-height: 24px;
`;

const NameField = styled.div`
  display: flex;
  align-items: center;
  margin-left: -7px;
  padding: 0 4px 0 4px;
  background: #fff;
  border: 1px solid #7a7a7a;
`;

const NameInput = styled.input`
  flex: 1;
  min-width: 0;
  padding: 0;
  border: 0;
  outline: 0;
`;

const TypeField = styled.div`
  display: flex;
  align-items: center;
  padding: 0 4px 0 3px;
  background: #e2e2e2;
  border: 1px solid #ababab;
`;

const TypeSelect = styled.select`
  flex: 1;
  min-width: 0;
  padding: 0;
  border: 0;
  outline: 0;
  appearance: none;
  background: none;
  font-feature-settings: inherit;
`;

const FooterButtons = styled.div`
  grid-column: 3;
  display: grid;
  grid-template-columns: 1fr 1fr;
  gap: 14px;
  padding-left: 1px;
`;

const PushButton = styled.button`
  position: relative;
  height: 24px;
  background: #e2e2e2;
  border: 1px solid #ababab;
`;

const Grip = styled.span`
  position: absolute;
  right: 2px;
  bottom: 2px;
`;

/* ---------- annotations ---------- */

const frame = css`
  position: absolute;
  border: 4px solid #ff0000;
  border-radius: 5px;
  pointer-events: none;
`;

const FileFrame = styled.span`
  ${frame}
  left: 163px;
  top: 137px;
  width: 193px;
  height: 42px;
`;

const ButtonFrame = styled.span`
  ${frame}
  inset: -12px -11px -12px -15px;
`;

const FormFrame = styled.div`
  ${frame}
  left: 117px;
  right: 156px;
  top: 724px;
  height: 153px;
`;

const Step = styled.div<{ $x: number; $y: number }>`
  position: absolute;
  left: ${(p) => p.$x}px;
  top: ${(p) => p.$y}px;
  display: flex;
  gap: 11px;
`;

const Badge = styled.span`
  flex: none;
  width: 27px;
  height: 27px;
  margin-top: 5px;
  border: 1px solid #f01818;
  border-radius: 50%;
  background: #e43338;
  box-shadow: 1px 3px 4px rgba(0, 0, 0, 0.35);
  color: #fff;
  font-size: 14px;
  line-height: 24px;
  text-align: center;
`;

const StepText = styled.p<{ $size: number }>`
  margin: 0;
  font-family: ${paperFont};
  font-feature-settings: "halt";
  font-size: ${(p) => p.$size}px;
  line-height: 30px;
  font-weight: 700;
  white-space: nowrap;
  color: #ff0000;
`;

const DownArrow = styled.svg`
  position: absolute;
  left: 281px;
  top: 558px;
`;

const tabs: [string, number][] = [
  ["ファイル", 64], ["ホーム", 54], ["表示", 54], ["ツール", 56], ["書式", 53], ["テキスト書式", 88], ["差込", 53], ["フォーム", 62],
];

const places: { icon: string; name: string; root?: boolean; gap?: boolean; on?: boolean; pin?: boolean }[] = [
  { icon: "picture", name: "ピクチャ", pin: true },
  { icon: "cloud", name: "OneDrive", root: true, gap: true },
  { icon: "doc", name: "ドキュメント" },
  { icon: "pc", name: "PC", root: true, gap: true },
  { icon: "cube", name: "3D オブジェクト" },
  { icon: "down", name: "ダウンロード" },
  { icon: "desk", name: "デスクトップ" },
  { icon: "doc", name: "ドキュメント" },
  { icon: "picture", name: "ピクチャ" },
  { icon: "film", name: "ビデオ" },
  { icon: "music", name: "ミュージック" },
  { icon: "drive", name: "ボリューム (A:)", on: true },
];

const files: [string, string][] = [
  ["h31_01.wppx", "2019/10/17 1"],
  ["h31_01-object.wptx", "2019/10/17 1"],
  ["r2bun_01.wppx", "2019/10/17 1"],
  ["r2bun_01.pdf", "2019/10/17 1"],
  ["sample_form(1).pdf", "2019/10/17 1"],
  ["AHF5_sampleform.pdf", "2019/10/16 1"],
  ["サンプル申請書_墨消し.pdf", "2019/10/11 1"],
  ["サンプル申請書.pdf", "2019/10/11 1"],
  ["h31_01.pdf", "2019/10/09 1"],
  ["new-format.pdf", "2019/10/07 1"],
  ["20190123_data.pdf", "2019/10/07 1"],
  ["sample001.pdf", "2019/08/28 9"],
];

const fileIcon = (name: string) =>
  name.endsWith(".pdf") ? <PdfFileIcon /> : name.endsWith(".wptx") ? <BlankFileIcon /> : <AppIcon />;

const Big = ({ w, icon, label, on, off, caret }: { w: number; icon: React.ReactNode; label: React.ReactNode; on?: boolean; off?: boolean; caret?: boolean }) => (
  <BigButton $w={w} $on={on} $off={off}>
    <IconSlot>{icon}</IconSlot>
    <span>{label}</span>
    {caret && <CaretSlot><Caret /></CaretSlot>}
  </BigButton>
);

const Editor = () => (
  <EditorWindow>
    <TitleBar>
      <QuickBar>
        <QuickButton aria-label="アプリ"><AppIcon size={15} /></QuickButton>
        <QuickButton aria-label="印刷"><PrinterIcon /></QuickButton>
        <QuickButton aria-label="保存"><QuickSaveIcon /></QuickButton>
        <QuickButton aria-label="PDF保存"><FloppyPdfIcon size={16} label="P" /></QuickButton>
        <QuickButton aria-label="元に戻す"><UndoIcon /></QuickButton>
        <QuickButton aria-label="やり直し"><UndoIcon flip /></QuickButton>
        <QuickButton aria-label="範囲選択"><AreaCursorIcon /></QuickButton>
        <QuickButton aria-label="選択" $on><CursorIcon /></QuickButton>
        <QuickButton aria-label="チェック"><TickIcon /></QuickButton>
        <QuickButton aria-label="ヘルプ"><HelpIcon bg="#3d7fbd" /></QuickButton>
        <QuickButton aria-label="カスタマイズ" $narrow>
          <svg width="9" height="8" viewBox="0 0 9 8"><path d="M0 0h9v1.500H0zM0 3h9L4.500 7.500z" fill="#fff" /></svg>
        </QuickButton>
      </QuickBar>
      <AppTitle>瞬簡PDF 書けまっせ 8 - [r2bun_01.pdf]</AppTitle>
      <WindowButtons>
        <WindowButton $w={46} aria-label="最小化"><svg width="9" height="10"><path d="M0 7h9v2H0z" fill="#fff" /></svg></WindowButton>
        <WindowButton $w={46} aria-label="最大化"><svg width="10" height="10"><path d="M.5 1h9v8.500h-9z" fill="none" stroke="#fff" /><path d="M0 0h10v3H0z" fill="#fff" /></svg></WindowButton>
        <WindowButton $w={46} aria-label="閉じる"><Cross size={11} /></WindowButton>
      </WindowButtons>
    </TitleBar>
    <TabRow>
      {tabs.map(([name, w], i) => (
        <RibbonTab key={name} $w={w} $on={i === 1}>{name}</RibbonTab>
      ))}
      <WindowButtons>
        <WindowButton $w={17} aria-label="文書を最小化"><svg width="6" height="8"><path d="M0 6h6v2H0z" fill="#fff" /></svg></WindowButton>
        <WindowButton $w={17} aria-label="文書を元に戻す"><svg width="8" height="9"><path d="M2.500 2V1h5v4h-2M.5 4h5v4.500h-5z" fill="none" stroke="#fff" strokeWidth="1.500" /></svg></WindowButton>
        <WindowButton $w={17} aria-label="文書を閉じる"><Cross size={8} /></WindowButton>
      </WindowButtons>
    </TabRow>
    <Ribbon>
      <Group $w={149}>
        <GroupBody $pad={9}>
          <Big w={42} icon={<OpenFolderIcon />} label="開く" />
          <Big w={42} icon={<FloppyIcon size={26} color="#a5a5a5" />} label="保存" off />
          <Big w={50} icon={<FloppyPdfIcon size={30} label="PDF" />} label="PDF出力" />
        </GroupBody>
        <GroupName>ファイル</GroupName>
      </Group>
      <Group $w={122}>
        <GroupBody $pad={5}>
          <Big w={49} icon={<PasteIcon />} label="貼り付け" />
          <SmallColumn>
            <SmallButton $off><ScissorsIcon />切り取り</SmallButton>
            <SmallButton $off><CopyIcon />コピー</SmallButton>
            <SmallButton $off><Cross size={15} color="#a8a8a8" />削除</SmallButton>
          </SmallColumn>
        </GroupBody>
        <GroupName>編集</GroupName>
      </Group>
      <Group $w={138}>
        <GroupBody $pad={6}>
          <Big w={43} icon={<CursorIcon w={18} stroke="#777" />} label="選択" on />
          <SmallColumn>
            <SmallButton><HandIcon />手のひら</SmallButton>
            <SmallButton><ZoomIcon />ズーム</SmallButton>
            <SmallButton><TextSelectIcon />テキスト選択</SmallButton>
          </SmallColumn>
        </GroupBody>
        <GroupName>ツール</GroupName>
      </Group>
      <Group $w={366}>
        <GroupBody $pad={8}>
          <Big w={49} icon={<WandIcon />} label={<>文書<br />自動認識</>} />
          <Big w={46} icon={<TextBoxIcon />} label="テキスト" caret />
          <SmallColumn>
            <SmallButton><PictureIcon />画像<SideCaret><Caret /></SideCaret></SmallButton>
            <SmallButton><TapeIcon />修正テープ<SideCaret><Caret /></SideCaret></SmallButton>
            <SmallButton><StampIcon />印影</SmallButton>
          </SmallColumn>
          <Push />
          <Gallery>
            <GalleryGrid>
              {shapes.map((s, i) => (
                <GalleryCell key={i} aria-label={`図形${i + 1}`}><svg width="18" height="16">{s}</svg></GalleryCell>
              ))}
            </GalleryGrid>
            <GallerySteps>
              <GalleryStep aria-label="上"><svg width="6" height="3"><path d="M0 3h6L3 0z" fill="#bbb" /></svg></GalleryStep>
              <GalleryStep aria-label="下"><Caret w={6} /></GalleryStep>
              <GalleryStep aria-label="一覧"><svg width="7" height="6"><path d="M0 0h7v1H0zM0 2.500h7L3.500 6z" fill="#666" /></svg></GalleryStep>
            </GallerySteps>
          </Gallery>
          <Big w={42} icon={<NumberBoxIcon />} label="差込" caret />
        </GroupBody>
        <GroupName>オブジェクト</GroupName>
      </Group>
      <Group $w={188}>
        <GroupBody $pad={7}>
          <Big w={42} icon={<LassoIcon />} label={<>手書き<br />選択</>} />
          <Big w={43} icon={<PenIcon />} label="ペン" caret />
          <Big w={47} icon={<MarkerIcon />} label="蛍光ペン" caret />
          <Big w={44} icon={<EraserIcon />} label="消しゴム" caret />
        </GroupBody>
        <GroupName>手書き</GroupName>
      </Group>
    </Ribbon>
    <DocTabs>
      <DocTab $w={120}>r2bun_01.pdf<Cross /></DocTab>
    </DocTabs>
    <DocArea>
      <TaxForm left={44} side={40} />
      <VBar $inset={2}>
        <BarButton $size={25} aria-label="上へ"><Chevron dir="up" /></BarButton>
        <Thumb />
      </VBar>
    </DocArea>
  </EditorWindow>
);

const Result = () => (
  <ResultWindow>
    <RibbonEdge />
    <DocTabs>
      <DocTab $w={128}>r2bun_01.pdf *<Cross /></DocTab>
    </DocTabs>
    <DocArea>
      <TaxForm left={10} side={73} data={filled} />
      <VBar $inset={1}>
        <Thumb $length={188} />
      </VBar>
    </DocArea>
  </ResultWindow>
);

const OpenDialog = () => (
  <Dialog role="dialog" aria-label="開く">
    <DialogTitle>
      <AppIcon />
      開く
      <Push />
      <button aria-label="閉じる"><Cross size={12} color="#777" weight={1} /></button>
    </DialogTitle>
    <NavRow>
      <NavButton $w={28} aria-label="戻る"><Arrow dir="left" color="#ccc" /></NavButton>
      <NavButton $w={29} aria-label="進む"><Arrow dir="right" color="#ccc" /></NavButton>
      <NavButton $w={20} aria-label="履歴"><Chevron dir="down" size={7} color="#ccc" /></NavButton>
      <NavButton $w={21} aria-label="上へ"><Arrow dir="up" color="#555" /></NavButton>
      <Address>
        <svg width="14" height="16" viewBox="0 0 14 16"><path d="M0 0h10l4 3v13H0z" fill="#fcdc7a" stroke="#e8bf4f" /><path d="M6 0q5-1 7 6-3-1-4-3-1-2-3-3z" fill="#3c86c8" /></svg>
        <NavButton $w={20} aria-label="ルート"><Chevron dir="right" size={7} color="#666" /></NavButton>
        {["PC", "ボリューム (A:)", "temp"].map((name) => (
          <Crumb key={name}>{name}<Chevron dir="right" size={7} color="#666" /></Crumb>
        ))}
        <Crumb>test</Crumb>
        <Push />
        <NavButton $w={20} aria-label="候補"><Chevron dir="down" color="#666" /></NavButton>
        <Refresh aria-label="更新">
          <svg width="12" height="12" viewBox="0 0 12 12"><path d="M8 2.500A4.300 4.300 0 1 1 3 3M3 0v3.500h4" fill="none" stroke="#666" strokeWidth="1.600" /></svg>
        </Refresh>
      </Address>
      <Search>
        <SearchInput placeholder="testの検索" aria-label="testの検索" />
        <svg width="12" height="12" viewBox="0 0 12 12"><circle cx="7.500" cy="4.500" r="3.500" fill="none" stroke="#666" strokeWidth="1.500" /><path d="M5 7l-4 4.500" stroke="#666" strokeWidth="2" /></svg>
      </Search>
    </NavRow>
    <CommandBar>
      <Command>整理<Caret w={8} color="#1e395b" /></Command>
      <Command $gap={31}>新しいフォルダー</Command>
      <Push />
      <Command aria-label="表示方法">
        <svg width="16" height="13" viewBox="0 0 16 13" fill="none" stroke="#777"><path d="M.5.500h4v12h-4zM.5 4.500h4M.5 8.500h4M7 2.500h4M12 2.500h4M7 6.500h4M12 6.500h4M7 10.500h4M12 10.500h4" /></svg>
        <Caret w={8} color="#1e395b" />
      </Command>
      <Command $gap={21} aria-label="プレビュー">
        <svg width="16" height="12"><path d="M.5.500h15v11H.5zM3.500 2v10" fill="#fff" stroke="#777" /><path d="M0 0h16v2H0z" fill="#777" /><path d="M13 2h2v9h-2z" fill="#3a96dd" /></svg>
      </Command>
      <Command $gap={20} aria-label="ヘルプ"><HelpIcon bg="#0a66c2" /></Command>
    </CommandBar>
    <DialogBody>
      <Places>
        {places.map((p, i) => (
          <Place key={i} $root={p.root} $gap={p.gap} $on={p.on}>
            <PlaceIcon kind={p.icon} />
            {p.name}
            {p.pin && (
              <>
                <Push />
                <svg width="10" height="10" viewBox="0 0 10 10"><path d="M6 0l4 4-1 .5-2 2v2L4.500 6.500 1 10 0 9l3.500-3.500L1 3h2.500l2-2z" fill="#8b98a6" /></svg>
              </>
            )}
          </Place>
        ))}
      </Places>
      <VBar $w={16}>
        <BarButton $size={18} aria-label="上へ"><Chevron dir="up" /></BarButton>
        <Thumb $before={38} $length={107} />
        <Push />
        <BarButton aria-label="下へ"><Chevron dir="down" /></BarButton>
      </VBar>
      <Files>
        <FilesTop>
          <FileScroll>
            <FileTable>
              <thead>
                <tr>
                  <HeadCell>名前</HeadCell>
                  <HeadCell $w={74} $line>更新日時</HeadCell>
                </tr>
              </thead>
              <tbody>
                {files.map(([name, date], i) => (
                  <FileRow key={name} $on={i === 1} $first={i === 0}>
                    <FileCell><FileName><IconBox>{fileIcon(name)}</IconBox>{name}</FileName></FileCell>
                    <FileCell>{date}</FileCell>
                  </FileRow>
                ))}
              </tbody>
            </FileTable>
          </FileScroll>
          <VBar $w={16}>
            <BarButton $size={17} aria-label="上へ"><Chevron dir="up" /></BarButton>
            <Thumb $length={173} />
            <Push />
            <BarButton aria-label="下へ"><Chevron dir="down" /></BarButton>
          </VBar>
        </FilesTop>
        <HBar>
          <BarButton aria-label="左へ"><Chevron dir="left" /></BarButton>
          <Thumb $flat $length={170} />
          <Push />
          <BarButton aria-label="右へ"><Chevron dir="right" /></BarButton>
          <VBar $w={16} />
        </HBar>
      </Files>
      <Preview>プレビューを利用できません。</Preview>
    </DialogBody>
    <DialogFooter onSubmit={(e) => e.preventDefault()}>
      <FieldLabel htmlFor="file-name">ファイル名(N):</FieldLabel>
      <NameField>
        <NameInput id="file-name" defaultValue="h31_01-object.wptx" />
        <Chevron dir="down" color="#444" weight={1} />
      </NameField>
      <TypeField>
        <TypeSelect aria-label="ファイルの種類">
          <option>PDF/画像/書けまっせ 編集 ファイル</option>
        </TypeSelect>
        <Chevron dir="down" color="#444" weight={1} />
      </TypeField>
      <FooterButtons>
        <PushButton type="submit">開く(O)<ButtonFrame /></PushButton>
        <PushButton type="button">キャンセル</PushButton>
      </FooterButtons>
    </DialogFooter>
    <Grip><svg width="9" height="9"><path d="M6 0h2v2H6zM3 3h2v2H3zM6 3h2v2H6zM0 6h2v2H0zM3 6h2v2H3zM6 6h2v2H6z" fill="#b5b5b5" /></svg></Grip>
    <FileFrame />
  </Dialog>
);

export default function App() {
  return (
    <>
      <Global />
      <Stage>
        <WindowShadow $top={653} />
        <WindowShadow $top={0} $height={430} />
        <Editor />
        <Result />
        <OpenDialog />
        <FormFrame />
        <Step $x={149} $y={159}>
          <Badge>1</Badge>
          <StepText $size={24}>オブジェクトテンプレートを反映させたいPDFを開きます。</StepText>
        </Step>
        <Step $x={66} $y={456}>
          <Badge>2</Badge>
          <StepText $size={23}>
            使用したいオブジェクトテンプ
            <br />
            レート（.wptx）ファイルを開き
            <br />
            ます。
          </StepText>
        </Step>
        <DownArrow width="42" height="154" viewBox="0 0 42 154">
          <path d="M20.500 0h2L31 111l11-4-21 47L0 107l11 4z" fill="#f00" />
        </DownArrow>
        <Step $x={79} $y={689}>
          <StepText $size={25}>反映された状態</StepText>
        </Step>
      </Stage>
    </>
  );
}
